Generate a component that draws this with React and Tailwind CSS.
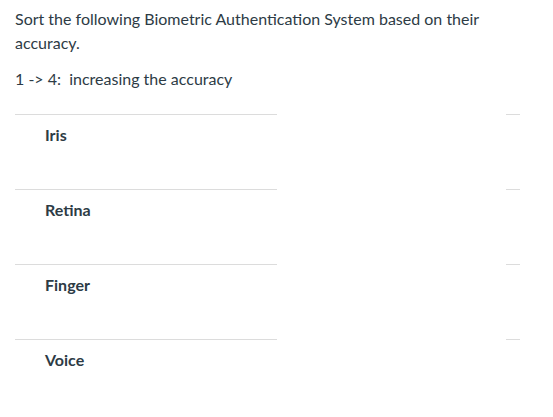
export default function App() {
  const items = ['Iris', 'Retina', 'Finger', 'Voice'];

  return (
    <div className="min-h-[417px] bg-white px-[15px] pt-[7px] text-[16px] text-[#2d3b45] font-['Lato','Liberation_Sans',sans-serif]">
      <div className="w-[505px]">
        <p className="leading-[24px]">
          Sort the following Biometric Authentication System based on their accuracy.
        </p>
        <p className="mt-[12px] leading-[24px]">1 -&gt; 4:&nbsp; increasing the accuracy</p>
      </div>

      <div className="mt-[23px]">
        {items.map((item) => (
          <div key={item} className="flex h-[75px]">
            <div className="w-[262px] border-t border-[#dcdcdc] pl-[30px] pt-[10px] font-bold leading-[20px]">
              {item}
            </div>
            <div className="ml-[229px] w-[14px] border-t border-[#dcdcdc]" />
          </div>
        ))}
      </div>
    </div>
  );
}
